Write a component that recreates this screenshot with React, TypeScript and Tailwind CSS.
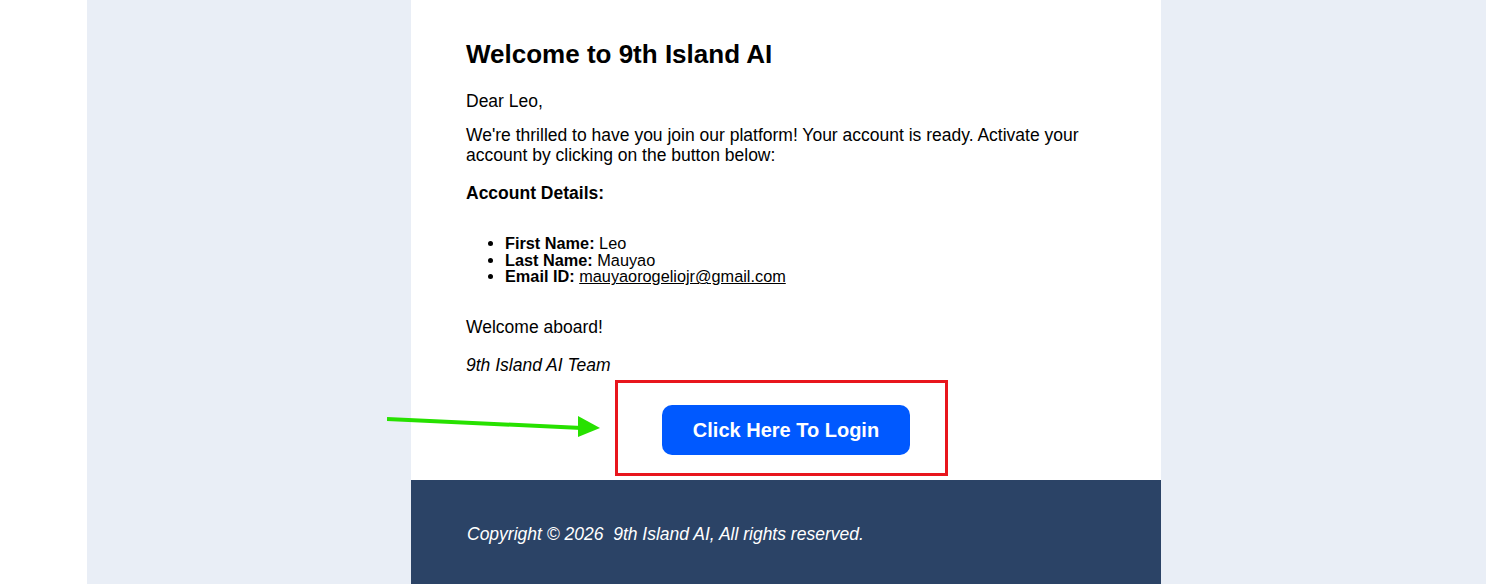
import React from "react";

export default function App() {
  return (
    <div
      className="flex min-h-screen w-full bg-white"
      style={{ fontFamily: '"Liberation Sans", Arial, sans-serif' }}
    >
      <div className="w-[87px] shrink-0 bg-white" />
      <div className="flex flex-1 justify-center bg-[#e9eef6] pr-[1px]">
        <div className="flex w-[750px] flex-col bg-white text-black">
          <div className="px-[55px] pt-[40px]">
            <h1 className="text-[26px] font-bold leading-[28px]">Welcome to 9th Island AI</h1>
            <p className="mt-[23px] text-[17.5px] leading-[20px]">Dear Leo,</p>
            <p className="mt-[14px] text-[17.5px] leading-[20px]">
              We're thrilled to have you join our platform! Your account is ready. Activate your
              account by clicking on the button below:
            </p>
            <p className="mt-[18px] text-[17.5px] font-bold leading-[20px]">Account Details:</p>
            <ul className="mt-[32px] list-disc pl-[39px] text-[16.3px] leading-[16.7px]">
              <li>
                <strong>First Name:</strong> Leo
              </li>
              <li>
                <strong>Last Name:</strong> Mauyao
              </li>
              <li>
                <strong>Email ID:</strong>{" "}
                <a href="#" className="underline">
                  mauyaorogeliojr@gmail.com
                </a>
              </li>
            </ul>
            <p className="mt-[32px] text-[17.5px] leading-[20px]">Welcome aboard!</p>
            <p className="mt-[18px] text-[17.5px] italic leading-[20px]">9th Island AI Team</p>
          </div>
          <div className="relative flex justify-center pb-[25px] pt-[30px]">
            <a
              href="#"
              className="flex h-[50px] w-[248px] items-center justify-center rounded-[10px] bg-[#0059ff] text-[20px] font-bold text-white"
            >
              Click Here To Login
            </a>
            <div className="pointer-events-none absolute left-[204px] top-[5px] h-[96px] w-[333px] border-[3px] border-[#e8161d]" />
            <svg
              className="pointer-events-none absolute left-[-24px] top-[39px]"
              width="215"
              height="26"
              viewBox="0 0 215 26"
            >
              <line x1="0" y1="5" x2="195" y2="14" stroke="#27e100" strokeWidth="4" />
              <polygon points="191,2 213,14 191,23" fill="#27e100" />
            </svg>
          </div>
          <div className="flex-1 bg-[#2b4366] px-[56px] pb-[45px] pt-[44px]">
            <p className="whitespace-pre text-[17.5px] italic leading-[20px] text-white">
              Copyright © 2026  9th Island AI, All rights reserved.
            </p>
          </div>
        </div>
      </div>
    </div>
  );
}
